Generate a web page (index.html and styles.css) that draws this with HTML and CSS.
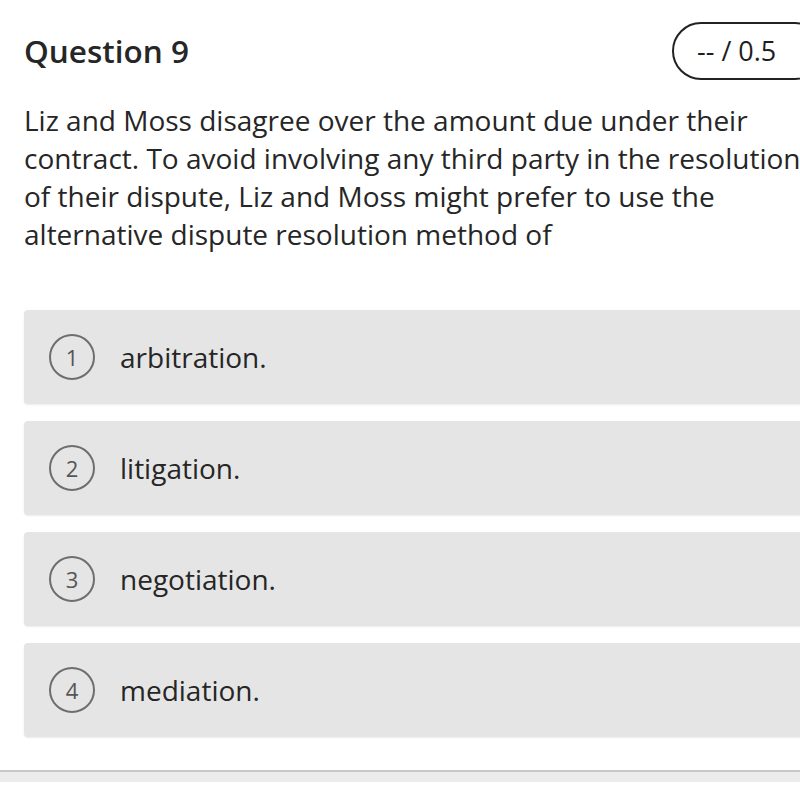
FILE: index.html
```html
<!DOCTYPE html>
<html>
<head>
<meta charset="utf-8">
<link rel="stylesheet" href="styles.css">
</head>
<body>
<div class="page">
  <div class="question">
    <div class="header">
      <h1 class="title">Question 9</h1>
      <div class="badge">-- / 0.5</div>
    </div>
    <p class="prompt">Liz and Moss disagree over the amount due under their contract. To avoid involving any third party in the resolution of their dispute, Liz and Moss might prefer to use the alternative dispute resolution method of</p>
    <div class="options">
      <div class="option"><span class="num">1</span><span class="label">arbitration.</span></div>
      <div class="option"><span class="num">2</span><span class="label">litigation.</span></div>
      <div class="option"><span class="num">3</span><span class="label">negotiation.</span></div>
      <div class="option"><span class="num">4</span><span class="label">mediation.</span></div>
    </div>
  </div>
  <div class="divider"></div>
</div>
</body>
</html>
```
FILE: styles.css
```css
html, body {
  margin: 0;
  padding: 0;
  background: #fff;
  overflow: hidden;
}
.page {
  width: 800px;
  height: 792px;
  overflow: hidden;
  font-family: "Open Sans", "Noto Sans", sans-serif;
  color: #262626;
}
.question {
  width: 800px;
  padding: 22px 0 0 24px;
  box-sizing: border-box;
}
.header {
  display: flex;
  justify-content: space-between;
  align-items: center;
  width: 800px;
}
.title {
  margin: 0;
  font-size: 31.5px;
  font-weight: 600;
  line-height: 58px;
}
.badge {
  box-sizing: border-box;
  height: 58px;
  width: 152px;
  border: 2px solid #222;
  border-radius: 29px;
  font-size: 27px;
  line-height: 54px;
  padding-left: 23px;
  color: #1e1e1e;
}
.prompt {
  margin: 21px 0 0 0;
  font-size: 28px;
  line-height: 38px;
  width: 790px;
}
.options {
  margin-top: 57px;
  display: flex;
  flex-direction: column;
  gap: 17px;
  width: 790px;
}
.option {
  display: flex;
  align-items: center;
  height: 94px;
  background: #e5e5e5;
  border-radius: 4px;
  box-shadow: 0 1px 2px rgba(0,0,0,0.08);
  padding-left: 25px;
}
.num {
  box-sizing: border-box;
  width: 46px;
  height: 46px;
  border: 2px solid #6e6e6e;
  border-radius: 50%;
  display: flex;
  align-items: center;
  justify-content: center;
  font-size: 22px;
  color: #555;
}
.label {
  margin-left: 25px;
  font-size: 28px;
  color: #262626;
}
.divider {
  margin-top: 33px;
  height: 2px;
  background: #c8c8c8;
  border-bottom: 10px solid #ececec;
}
```
